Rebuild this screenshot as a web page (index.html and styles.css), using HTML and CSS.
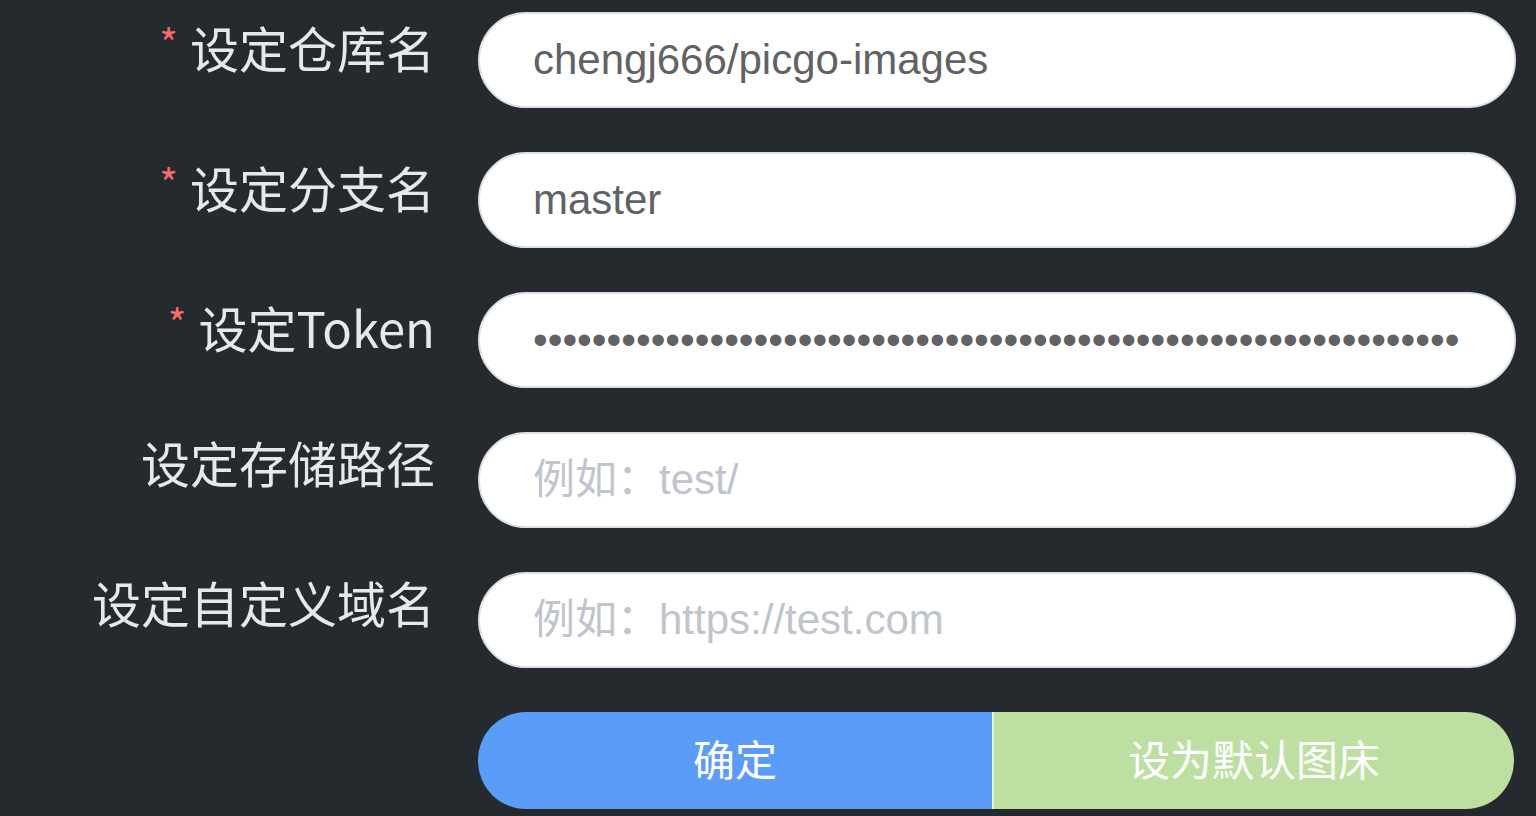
FILE: index.html
```html
<!DOCTYPE html>
<html lang="zh-CN">
<head>
<meta charset="utf-8">
<title>GitHub 图床设置</title>
<link rel="stylesheet" href="styles.css">
</head>
<body>
<form class="form">
  <label class="label required" for="repo">设定仓库名</label>
  <input class="input" id="repo" type="text" value="chengj666/picgo-images">

  <label class="label required" for="branch">设定分支名</label>
  <input class="input" id="branch" type="text" value="master">

  <label class="label required" for="token">设定Token</label>
  <input class="input" id="token" type="password" value="abcdefghijabcdefghijabcdefghijabcdefghijabcdefghijabcdefghijabc">

  <label class="label" for="path">设定存储路径</label>
  <input class="input" id="path" type="text" placeholder="例如：test/">

  <label class="label" for="domain">设定自定义域名</label>
  <input class="input" id="domain" type="text" placeholder="例如：https://test.com">

  <div class="spacer"></div>
  <div class="btn-group">
    <button type="button" class="btn btn-primary">确定</button>
    <button type="button" class="btn btn-success">设为默认图床</button>
  </div>
</form>
</body>
</html>
```

FILE: styles.css
```css
html, body {
  margin: 0;
  padding: 0;
  background: #242a2e;
  height: 100%;
  overflow: hidden;
}

.form {
  display: grid;
  grid-template-columns: 435px 1038px;
  column-gap: 43px;
  row-gap: 44px;
  padding-top: 12px;
  font-family: "Noto Sans CJK SC", "Noto Sans", sans-serif;
}

.label {
  font-size: 49px;
  line-height: 60px;
  height: 96px;
  color: #e8e8e8;
  text-align: right;
  white-space: nowrap;
}

.required::before {
  content: "*";
  color: #f56c6c;
  margin-right: 12px;
  font-size: 40px;
  vertical-align: 9px;
}

.input {
  box-sizing: border-box;
  height: 96px;
  width: 100%;
  margin: 0;
  border: 2px solid #dcdfe6;
  border-radius: 48px;
  background: #ffffff;
  padding: 0 52px 0 53px;
  font-family: "Liberation Sans", "Noto Sans CJK SC", sans-serif;
  font-size: 42px;
  color: #606266;
  outline: none;
}

.input::placeholder {
  color: #c0c4cc;
  font-family: "Liberation Sans", "Noto Sans CJK SC", sans-serif;
}

.btn-group {
  display: flex;
  width: 1036px;
  height: 97px;
}

.btn {
  border: 0;
  margin: 0;
  padding: 0 0 7px;
  height: 97px;
  color: #ffffff;
  font-family: "Noto Sans CJK SC", sans-serif;
  font-size: 42px;
  cursor: pointer;
}

.btn-primary {
  width: 514px;
  background: #5a9cf8;
  border-radius: 48px 0 0 48px;
}

.btn-success {
  flex: 1;
  background: #bde0a2;
  border-left: 2px solid rgba(255, 255, 255, 0.6);
  border-radius: 0 48px 48px 0;
}
```
